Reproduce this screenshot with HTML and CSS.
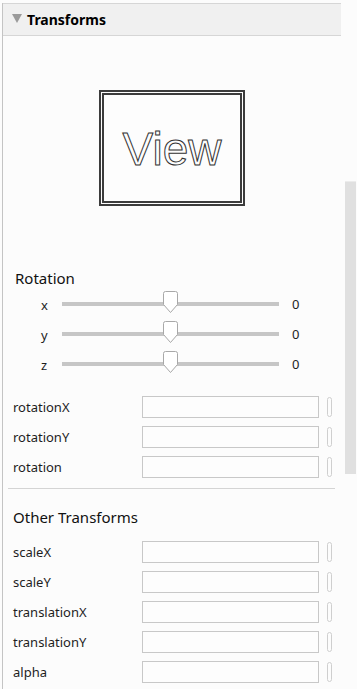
FILE: index.html
```html
<!DOCTYPE html>
<html>

<head>
	<meta name="viewport" content="width=device-width, initial-scale=1" />
	<link rel="stylesheet" href="styles.css">
</head>

<body>
	<div class="panel">
		<div class="panelHeader">
			<span class="caret"></span>
			<span class="panelTitle">Transforms</span>
		</div>

		<div class="preview">
			<div class="viewBox"><span class="viewText">View</span></div>
		</div>

		<div class="groupTitle rotationTitle">Rotation</div>
		<div class="sliderRow">
			<span class="axis">x</span>
			<div class="track"><svg class="thumb" width="17" height="23" viewBox="0 0 17 23"><path d="M1.5 2.5 Q1.5 0.5 3.5 0.5 H13.5 Q15.5 0.5 15.5 2.5 V13.5 L8.5 21.5 L1.5 13.5 Z" fill="#fff" stroke="#a8a8a8" /></svg></div>
			<span class="sliderVal">0</span>
		</div>
		<div class="sliderRow">
			<span class="axis">y</span>
			<div class="track"><svg class="thumb" width="17" height="23" viewBox="0 0 17 23"><path d="M1.5 2.5 Q1.5 0.5 3.5 0.5 H13.5 Q15.5 0.5 15.5 2.5 V13.5 L8.5 21.5 L1.5 13.5 Z" fill="#fff" stroke="#a8a8a8" /></svg></div>
			<span class="sliderVal">0</span>
		</div>
		<div class="sliderRow">
			<span class="axis">z</span>
			<div class="track"><svg class="thumb" width="17" height="23" viewBox="0 0 17 23"><path d="M1.5 2.5 Q1.5 0.5 3.5 0.5 H13.5 Q15.5 0.5 15.5 2.5 V13.5 L8.5 21.5 L1.5 13.5 Z" fill="#fff" stroke="#a8a8a8" /></svg></div>
			<span class="sliderVal">0</span>
		</div>

		<div class="fieldList rotationFields">
			<div class="fieldRow"><span class="fieldLabel">rotationX</span><span class="fieldInput"></span><span class="fieldBtn"></span></div>
			<div class="fieldRow"><span class="fieldLabel">rotationY</span><span class="fieldInput"></span><span class="fieldBtn"></span></div>
			<div class="fieldRow"><span class="fieldLabel">rotation</span><span class="fieldInput"></span><span class="fieldBtn"></span></div>
		</div>

		<div class="divider"></div>

		<div class="groupTitle otherTitle">Other Transforms</div>
		<div class="fieldList otherFields">
			<div class="fieldRow"><span class="fieldLabel">scaleX</span><span class="fieldInput"></span><span class="fieldBtn"></span></div>
			<div class="fieldRow"><span class="fieldLabel">scaleY</span><span class="fieldInput"></span><span class="fieldBtn"></span></div>
			<div class="fieldRow"><span class="fieldLabel">translationX</span><span class="fieldInput"></span><span class="fieldBtn"></span></div>
			<div class="fieldRow"><span class="fieldLabel">translationY</span><span class="fieldInput"></span><span class="fieldBtn"></span></div>
			<div class="fieldRow"><span class="fieldLabel">alpha</span><span class="fieldInput"></span><span class="fieldBtn"></span></div>
		</div>
	</div>

	<div class="scrollThumb"></div>
</body>

</html>
```

FILE: styles.css
```css
html,
body {
	margin: 0;
	padding: 0;
	height: 100%;
	overflow: hidden;
	background-color: #fcfcfc;
	font-family: "Noto Sans", "Open Sans", sans-serif;
	color: #1e1e1e;
}

.panel {
	margin-left: 2px;
	margin-top: 3px;
	width: 338px;
	min-height: 700px;
	border-left: 1px solid #c4c4c4;
}

.panelHeader {
	display: flex;
	align-items: center;
	height: 31px;
	background-color: #f0f0f0;
	border-top: 1px solid #d6d6d6;
	border-bottom: 1px solid #d6d6d6;
}

.caret {
	width: 0;
	height: 0;
	margin-left: 9px;
	margin-top: -2px;
	border-left: 5px solid transparent;
	border-right: 5px solid transparent;
	border-top: 9px solid #9a9a9a;
}

.panelTitle {
	margin-left: 5px;
	font-size: 14px;
	font-weight: bold;
	color: #000;
	line-height: 20px;
}

.preview {
	padding-top: 54px;
	padding-left: 96px;
}

.viewBox {
	display: flex;
	align-items: center;
	justify-content: center;
	box-sizing: border-box;
	width: 146px;
	height: 116px;
	border: 5px double #3c3c3c;
	background-color: #fdfdfd;
}

.viewText {
	font-family: "Liberation Sans", Arial, sans-serif;
	font-size: 46px;
	line-height: 50px;
	color: #fdfdfd;
	-webkit-text-stroke: 1px #333;
	margin-top: 2px;
}

.groupTitle {
	font-size: 15px;
	line-height: 20px;
	color: #111;
}

.rotationTitle {
	margin-top: 62px;
	margin-left: 12px;
	margin-bottom: 1px;
}

.sliderRow {
	display: flex;
	align-items: center;
	height: 30px;
	padding-left: 38px;
	font-size: 13px;
}

.axis {
	width: 21px;
	line-height: 16px;
	margin-top: 1px;
}

.track {
	position: relative;
	width: 217px;
	height: 4px;
	background-color: #c6c6c6;
}

.thumb {
	position: absolute;
	left: 100px;
	top: -11px;
}

.sliderVal {
	margin-left: 13px;
	line-height: 16px;
}

.rotationFields {
	margin-top: 13px;
}

.fieldRow {
	display: flex;
	align-items: center;
	height: 30px;
	font-size: 13px;
}

.fieldLabel {
	width: 129px;
	padding-left: 10px;
	line-height: 16px;
}

.fieldInput {
	box-sizing: border-box;
	width: 177px;
	height: 22px;
	border: 1px solid #c8c8c8;
	background-color: #fdfdfd;
}

.fieldBtn {
	box-sizing: border-box;
	width: 5px;
	height: 20px;
	margin-left: 8px;
	border: 1px solid #cfcfcf;
	border-radius: 3px;
}

.divider {
	margin-top: 6px;
	margin-left: 5px;
	width: 327px;
	border-top: 1px solid #d4d4d4;
}

.otherTitle {
	margin-top: 18px;
	margin-left: 10px;
	margin-bottom: 10px;
}

.scrollThumb {
	position: absolute;
	left: 345px;
	top: 181px;
	width: 11px;
	height: 292px;
	background-color: #e0e0e0;
	border-top: 1px solid #ececec;
}
```
